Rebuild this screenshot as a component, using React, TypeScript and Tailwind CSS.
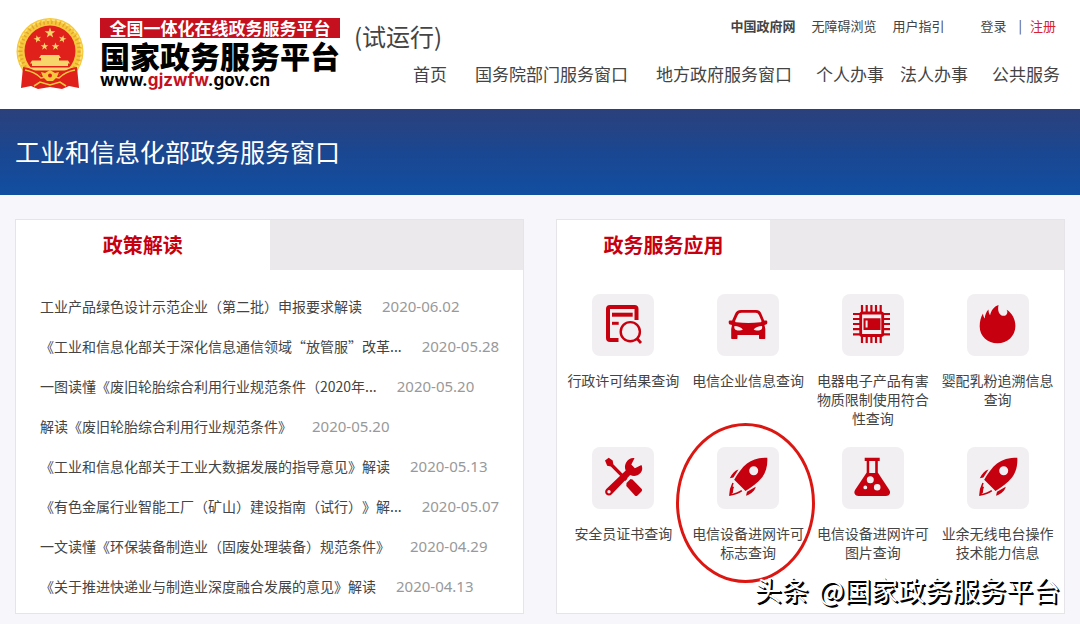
import clsx from "clsx";
import React from "react";

interface NavItem {
  label: string;
  className?: string;
}

interface Article {
  title: string;
  date: string;
}

interface Service {
  label: string;
  icon: React.ReactNode;
  circled?: boolean;
}

const navItems: NavItem[] = [
  { label: "首页" },
  { label: "国务院部门服务窗口", className: "ml-7" },
  { label: "地方政府服务窗口", className: "ml-7" },
  { label: "个人办事", className: "ml-6" },
  { label: "法人办事", className: "ml-4" },
  { label: "公共服务", className: "ml-6" },
];

const articles: Article[] = [
  {
    title: "工业产品绿色设计示范企业（第二批）申报要求解读",
    date: "2020-06.02",
  },
  {
    title: "《工业和信息化部关于深化信息通信领域“放管服”改革...",
    date: "2020-05.28",
  },
  {
    title: "一图读懂《废旧轮胎综合利用行业规范条件（2020年...",
    date: "2020-05.20",
  },
  { title: "解读《废旧轮胎综合利用行业规范条件》", date: "2020-05.20" },
  {
    title: "《工业和信息化部关于工业大数据发展的指导意见》解读",
    date: "2020-05.13",
  },
  {
    title: "《有色金属行业智能工厂（矿山）建设指南（试行）》解...",
    date: "2020-05.07",
  },
  {
    title: "一文读懂《环保装备制造业（固废处理装备）规范条件》",
    date: "2020-04.29",
  },
  {
    title: "《关于推进快递业与制造业深度融合发展的意见》解读",
    date: "2020-04.13",
  },
];

const Icon: React.FC<{ children: React.ReactNode }> = ({ children }) => (
  <svg
    viewBox="0 0 62 62"
    className="size-full text-[#c7000f]"
    fill="currentColor"
    aria-hidden="true"
  >
    {children}
  </svg>
);

const SearchDocIcon = () => (
  <Icon>
    <g fill="none" stroke="currentColor">
      <path
        d="M26.5 46H18a2 2 0 0 1-2-2V15a2 2 0 0 1 2-2h24.5a2 2 0 0 1 2 2v11"
        strokeWidth="4"
      />
      <path d="M20 20.7h20.7" strokeWidth="4" />
      <path d="M20 29.3h6.7" strokeWidth="3" />
      <circle cx="38.3" cy="37.7" r="9.6" strokeWidth="2.4" />
      <path d="M45 44.5l4 4.5" strokeWidth="2.8" />
    </g>
  </Icon>
);

const CarIcon = () => (
  <Icon>
    <path
      fillRule="evenodd"
      d="M24 16h15c3 0 4.500 1.500 5.500 4l2.700 6.500h2.300c1 0 1.300 3.500-.5 4l-1.500.5.8 4v9c0 .7-.4 1-1 1h-4.300c-.6 0-1-.3-1-1v-3H20.500v3c0 .7-.4 1-1 1h-4.300c-.6 0-1-.3-1-1v-9l.8-4-2-.5c-1.800-.5-1.500-4-.5-4h2.600L18 20c1-2.500 3-4 6-4zM24.500 18.800c-2 0-3 .8-3.800 2.500l-2.400 5.200c-.4 1 0 1.800 1 1.800 8 .9 16 .9 24 0 1 0 1.400-.8 1-1.800L42 21.300c-.8-1.700-1.800-2.500-3.500-2.500zM17.500 32c-.6 2.200.3 4.200 3 4.400 2.300.2 4.300-.2 5.300-.9-1.500-2.200-5-3.500-8.300-3.500zM45 32c-3.300 0-6.800 1.300-8.300 3.500 1 .7 3 1.100 5.300.9 2.700-.2 3.600-2.200 3-4.400z"
    />
  </Icon>
);

const ChipIcon = () => (
  <Icon>
    <rect
      x="18.7"
      y="19"
      width="22"
      height="22.5"
      rx="1.5"
      fill="none"
      stroke="currentColor"
      strokeWidth="2.8"
    />
    <path
      d="M20 11v7M24.700 11v7M29.400 11v7M34 11v7M38.700 11v7M20 42v7M24.700 42v7M29.400 42v7M34 42v7M38.700 42v7M11 20h7M11 25h7M11 30h7M11 35.200h7M11 40.300h7M41 20h7M41 25h7M41 30h7M41 35.200h7M41 40.300h7"
      stroke="currentColor"
      strokeWidth="2.2"
    />
    <path
      fillRule="evenodd"
      d="M21.500 24.300h17V36h-17zM23.600 26.600v7h2v-7z"
    />
  </Icon>
);

const FireIcon = () => (
  <Icon>
    <path d="M30.500 49.300C20.500 49.300 12.700 42 12.700 32.500c0-5 1.100-9.500 3.300-13 .2 2 .7 3.600 1.700 5 .4-3.800 1.500-6.700 3.800-9 0 2.300.5 4.200 1.600 5.800 1-4.800 3.800-8.800 8.400-10.300-.8 3.800-.4 6.800 1.300 8.900 1.600 2 4.500 2.500 6.300 1 1.500-1.300 1.600-3.200.6-5.200 5.300 3.300 8.700 9.300 8.700 16.300 0 10-8 17.300-17.900 17.300z" />
  </Icon>
);

const ToolsIcon = () => (
  <Icon>
    <path d="M13 13.500l3.700-2.800 4 2.800.6 3.700 14.200 14.600-2.300 2.300L18.800 19.500l-3.600-.8z" />
    <path d="M34.500 36l4-4 2 .6 9 9.200c1 1 .6 2 0 2.600l-4 4c-.7.700-1.800.7-2.600 0L34.300 39z" />
    <path
      fillRule="evenodd"
      d="M42.500 11.200l-3.200 6.300 3.600 3.800 6.500-3.200c2.200 4.200-.2 8.800-4 10.200-2.600 1-5 .8-7.200-.3L19.800 47.300c-1.500 1.600-4 1.700-5.500.2-1.600-1.500-1.500-4 0-5.500l19.400-18.500c-1.100-2.500-1-5.200.3-7.700 1.700-3.300 5.200-5.200 8.500-4.600zM17 43a1.700 1.700 0 1 0 0 3.400 1.700 1.700 0 0 0 0-3.400z"
    />
  </Icon>
);

const RocketIcon = () => (
  <Icon>
    <path
      fillRule="evenodd"
      d="M50.300 10.700c.4 8-1.300 14.500-5.300 19.800C41 35.800 34.500 40 28.500 44L17.200 32.800C20.500 27 25 20.500 30 16.600c5.200-4.200 12-5.900 20.300-5.900zM36.700 19.200a4.500 4.500 0 1 0 0 9 4.500 4.500 0 0 0 0-9z"
    />
    <path d="M21.500 22.500c-3.500.9-6.500 4-8.700 8.700l3.600-.8zM38.700 39.700c-.8 3.800-3.800 6.800-9.700 9l1-4z" />
    <path
      d="M16 36c-1.800 3.500-2.800 7.500-3 12 4.500-.8 8.500-2 11.800-4.300"
      fill="none"
      stroke="currentColor"
      strokeWidth="1.6"
    />
    <path d="M13 48.500c0-3 .4-6.500 1.700-9.500l2.300 1c-.8 2-1 3.700-1 5.500z" />
  </Icon>
);

const FlaskIcon = () => (
  <Icon>
    <path
      fillRule="evenodd"
      d="M22.700 10.700h15v3.200h-1.900v11.600l11.400 17.300c2 3 .3 6.200-3.200 6.200H16.500c-3.500 0-5.300-3.200-3.300-6.200l11.500-17.300V13.900h-2zM27.200 13.900v12h6v-12zM28.300 29.300a3.500 3.500 0 1 0 0 7 3.500 3.500 0 0 0 0-7zM35.200 37a3.300 3.300 0 1 0 0 6.600 3.300 3.300 0 0 0 0-6.600zM23.300 38.500a1.900 1.900 0 1 0 0 3.800 1.900 1.900 0 0 0 0-3.800z"
    />
  </Icon>
);

const services: Service[] = [
  { label: "行政许可结果查询", icon: <SearchDocIcon /> },
  { label: "电信企业信息查询", icon: <CarIcon /> },
  { label: "电器电子产品有害物质限制使用符合性查询", icon: <ChipIcon /> },
  { label: "婴配乳粉追溯信息查询", icon: <FireIcon /> },
  { label: "安全员证书查询", icon: <ToolsIcon /> },
  { label: "电信设备进网许可标志查询", icon: <RocketIcon />, circled: true },
  { label: "电信设备进网许可图片查询", icon: <FlaskIcon /> },
  { label: "业余无线电台操作技术能力信息", icon: <RocketIcon /> },
];

const STAR =
  "M0-5 1.200-1.600 4.800-1.500 1.900.6 2.900 4 0 2-2.900 4-1.900.6-4.800-1.500-1.200-1.600z";

const Emblem = () => (
  <svg
    viewBox="0 0 68 72"
    className="h-[72px] w-[68px] shrink-0"
    role="img"
    aria-label="国徽"
  >
    <circle cx="34" cy="33.5" r="33.5" fill="#f6c83c" />
    <circle
      cx="34"
      cy="33.5"
      r="29.5"
      fill="none"
      stroke="#e5a52c"
      strokeWidth="4"
      strokeDasharray="1.5 2.5"
    />
    <circle
      cx="34"
      cy="33.5"
      r="31.5"
      fill="none"
      stroke="#fbe377"
      strokeWidth="1.5"
      strokeDasharray="3 2"
    />
    <circle cx="34" cy="33" r="25.5" fill="#e0201b" />
    <g fill="#f8d56a">
      <path d={STAR} transform="translate(34 15) scale(1.1)" />
      <path d={STAR} transform="translate(21.5 21) rotate(-15) scale(.8)" />
      <path d={STAR} transform="translate(46.5 21) rotate(15) scale(.8)" />
      <path d={STAR} transform="translate(28.5 28.500) scale(.8)" />
      <path d={STAR} transform="translate(39.5 28.500) scale(.8)" />
      <path d="M25 37h18l2 3h-2v2.500h9l2 3h-2V48H16v-2.500h-2l2-3h9V40h-2z" />
      <path d="M12 49.500h44l-2 3H14z" />
    </g>
    <path
      d="M7 49c8 1 14 4 18 8l9-4 9 4c4-4 10-7 18-8l2 21-10-2-7 3-12-2-12 2-7-3-10 2z"
      fill="#e0201b"
    />
    <path
      d="M25 54l4 1 5-3 5 3 4-1-2 5-4 4h-6l-4-4z"
      fill="#f6c83c"
    />
    <circle cx="34" cy="57.5" r="2" fill="#e0201b" />
    <path
      d="M9 52c6 1 12 4 16 8l5-1M59 52c-6 1-12 4-16 8l-5-1M18 68l6-4 10 3 10-3 6 4"
      fill="none"
      stroke="#f6c83c"
      strokeWidth="1.6"
    />
  </svg>
);

const Header = () => (
  <header className="flex h-[109px] bg-white pr-5 pl-4">
    <a href="#" className="flex shrink-0 gap-4 pt-[18px]">
      <Emblem />
      <div className="w-60 font-bold whitespace-nowrap">
        <div className="bg-[#c5101f] text-center text-[17px] leading-5 text-white">
          全国一体化在线政务服务平台
        </div>
        <div className="text-[30px] leading-[34px] font-black text-black">
          国家政务服务平台
        </div>
        <div className="font-[Inter,'Liberation_Sans',sans-serif] text-[17px] leading-4 text-black">
          www.<span className="text-[#c5101f]">gjzwfw</span>.gov.cn
        </div>
      </div>
    </a>
    <div className="flex-1 pl-[14px]">
      <div className="flex h-[62px] justify-between pt-4">
        <span className="pt-0.5 text-2xl leading-9">(试运行)</span>
        <div className="flex gap-4 pr-1 text-[13px] leading-5">
          <a href="#" className="font-bold">
            中国政府网
          </a>
          <a href="#">无障碍浏览</a>
          <a href="#">用户指引</a>
          <div className="flex gap-2 pl-5">
            <a href="#" className="pr-1">
              登录
            </a>
            <span>|</span>
            <a href="#" className="text-[#d8232e]">
              注册
            </a>
          </div>
        </div>
      </div>
      <nav className="flex justify-end text-[17px] leading-6 whitespace-nowrap">
        {navItems.map(({ label, className }) => (
          <a key={label} href="#" className={className}>
            {label}
          </a>
        ))}
      </nav>
    </div>
  </header>
);

interface PanelProps {
  title: string;
  tabClassName: string;
  children: React.ReactNode;
}

const Panel: React.FC<PanelProps> = ({ title, tabClassName, children }) => (
  <section className="border border-[#e6e4e9] bg-white">
    <div className="flex h-[50px] bg-[#ebe9ec]">
      <button
        type="button"
        className={clsx(
          "bg-white text-center text-xl font-bold text-[#c7000f]",
          tabClassName,
        )}
      >
        {title}
      </button>
    </div>
    {children}
  </section>
);

const ServiceCard: React.FC<{ service: Service }> = ({ service }) => (
  <a
    href="#"
    className="relative flex h-[135px] flex-col items-center text-center"
  >
    <div className="size-[62px] rounded-lg bg-[#f1eff1]">{service.icon}</div>
    <span className="mt-[15px] px-1 text-sm leading-[19px]">
      {service.label}
    </span>
    {service.circled && (
      <div className="absolute -top-6 -left-[10px] h-40 w-[139px] rounded-[50%] border-3 border-[#dc1712]" />
    )}
  </a>
);

const App = () => (
  <div className="relative min-h-screen overflow-hidden bg-[#f7f6fa] pb-[10px] font-['Noto_Sans_CJK_SC',sans-serif] text-[#444] [text-spacing-trim:space-all]">
    <Header />
    <div className="flex h-[86px] items-center bg-linear-to-b from-[#2a407c] via-[#1a4791] to-[#104ea1] px-[15px]">
      <h1 className="text-[25px] text-white">工业和信息化部政务服务窗口</h1>
    </div>
    <main className="grid grid-cols-2 gap-8 px-[15px] pt-6">
      <Panel title="政策解读" tabClassName="w-1/2">
        <ul className="px-6 pt-4 pb-[7px]">
          {articles.map(({ title, date }) => (
            <li
              key={title}
              className="flex h-10 items-center gap-5 whitespace-nowrap"
            >
              <a href="#" className="text-sm">
                {title}
              </a>
              <time className="font-['Noto_Sans',sans-serif] text-[15px] text-[#999]">
                {date}
              </time>
            </li>
          ))}
        </ul>
      </Panel>
      <Panel title="政务服务应用" tabClassName="w-[42%]">
        <div className="grid grid-cols-4 gap-y-[18px] px-1 pt-6">
          {services.map((service) => (
            <ServiceCard key={service.label} service={service} />
          ))}
        </div>
      </Panel>
    </main>
    <div className="absolute right-5 bottom-4 flex gap-[10px] text-[27px] leading-9 text-white [text-shadow:1px_1px_0_#000,2px_2px_0_#000]">
      <span>头条</span>
      <span>@国家政务服务平台</span>
    </div>
  </div>
);

export default App;
